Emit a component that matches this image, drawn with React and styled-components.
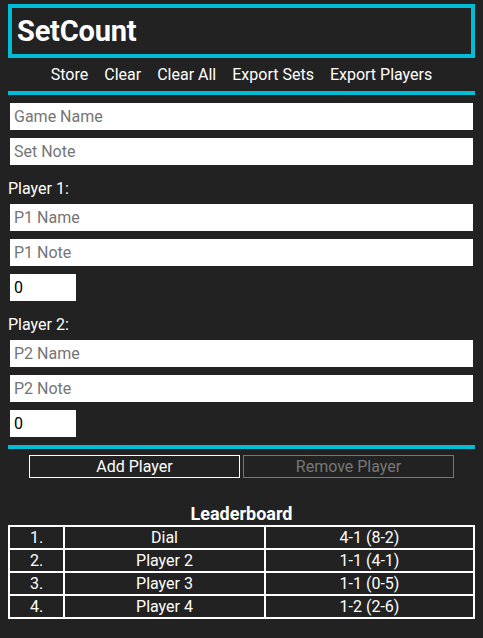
import React from 'react';
import styled, { createGlobalStyle } from 'styled-components';

const GlobalStyle = createGlobalStyle`
    html, body {
        margin: 0;
        padding: 0;
        background: #222222;
    }
    body {
        font-family: Roboto, "Liberation Sans", sans-serif;
        color: white;
    }
`;

const Page = styled.div`
    padding: 4px 8px 20px 8px;
`;

const Header = styled.div`
    height: 46px;
    border: 4px solid #00bcd4;
    display: flex;
    align-items: center;
    padding-left: 5px;
`;

const Title = styled.h1`
    margin: 0;
    font-size: 29px;
    font-weight: 700;
    line-height: 1;
    letter-spacing: -0.2px;
`;

const Nav = styled.div`
    height: 33px;
    display: flex;
    justify-content: center;
    align-items: center;
    gap: 16px;
`;

const NavLink = styled.span`
    font-size: 16px;
    cursor: pointer;
`;

const Divider = styled.div`
    height: 4px;
    background: #00bcd4;
    margin-bottom: ${props => props.below || 8}px;
`;

const TextInput = styled.input`
    display: block;
    box-sizing: border-box;
    width: ${props => props.narrow ? '66px' : 'calc(100% - 4px)'};
    height: 27px;
    margin: 0 2px 8px 2px;
    padding: 0 4px;
    border: none;
    outline: none;
    background: white;
    color: black;
    font-family: Roboto, "Liberation Sans", sans-serif;
    font-size: 16px;

    &::placeholder {
        color: #757575;
    }
`;

const Label = styled.div`
    font-size: 16px;
    line-height: 19px;
    padding-top: 6px;
    margin-bottom: 6px;
`;

const ButtonRow = styled.div`
    display: flex;
    justify-content: center;
    gap: 3px;
`;

const Button = styled.button`
    width: 211px;
    height: 23px;
    padding: 0;
    background: transparent;
    border: 1px solid ${props => props.disabled ? '#777777' : 'white'};
    color: ${props => props.disabled ? '#777777' : 'white'};
    font-family: Roboto, "Liberation Sans", sans-serif;
    font-size: 16px;
    cursor: ${props => props.disabled ? 'default' : 'pointer'};
`;

const BoardTitle = styled.h3`
    margin: 25px 0 1px 0;
    text-align: center;
    font-size: 18px;
    font-weight: 700;
    line-height: 21px;
`;

const Table = styled.table`
    width: 100%;
    border-collapse: collapse;
    border: 2px solid white;
`;

const Cell = styled.td`
    border: 2px solid white;
    padding: 1px;
    text-align: center;
    font-size: 16px;
    line-height: 19px;
    width: ${props => props.w || 'auto'};
`;

const players = [
    { name: 'Dial', record: '4-1 (8-2)' },
    { name: 'Player 2', record: '1-1 (4-1)' },
    { name: 'Player 3', record: '1-1 (0-5)' },
    { name: 'Player 4', record: '1-2 (2-6)' },
];

function PlayerFields({ n }) {
    return (
        <>
            <Label>Player {n}:</Label>
            <TextInput placeholder={`P${n} Name`} />
            <TextInput placeholder={`P${n} Note`} />
            <TextInput narrow type="text" defaultValue="0" />
        </>
    );
}

export default function App() {
    return (
        <Page>
            <GlobalStyle />
            <Header>
                <Title>SetCount</Title>
            </Header>
            <Nav>
                <NavLink>Store</NavLink>
                <NavLink>Clear</NavLink>
                <NavLink>Clear All</NavLink>
                <NavLink>Export Sets</NavLink>
                <NavLink>Export Players</NavLink>
            </Nav>
            <Divider />
            <TextInput placeholder="Game Name" />
            <TextInput placeholder="Set Note" />
            <PlayerFields n={1} />
            <PlayerFields n={2} />
            <Divider below={6} />
            <ButtonRow>
                <Button>Add Player</Button>
                <Button disabled>Remove Player</Button>
            </ButtonRow>
            <BoardTitle>Leaderboard</BoardTitle>
            <Table>
                <tbody>
                    {players.map((p, i) => (
                        <tr key={p.name}>
                            <Cell w="51px">{i + 1}.</Cell>
                            <Cell w="197px">{p.name}</Cell>
                            <Cell>{p.record}</Cell>
                        </tr>
                    ))}
                </tbody>
            </Table>
        </Page>
    );
}
